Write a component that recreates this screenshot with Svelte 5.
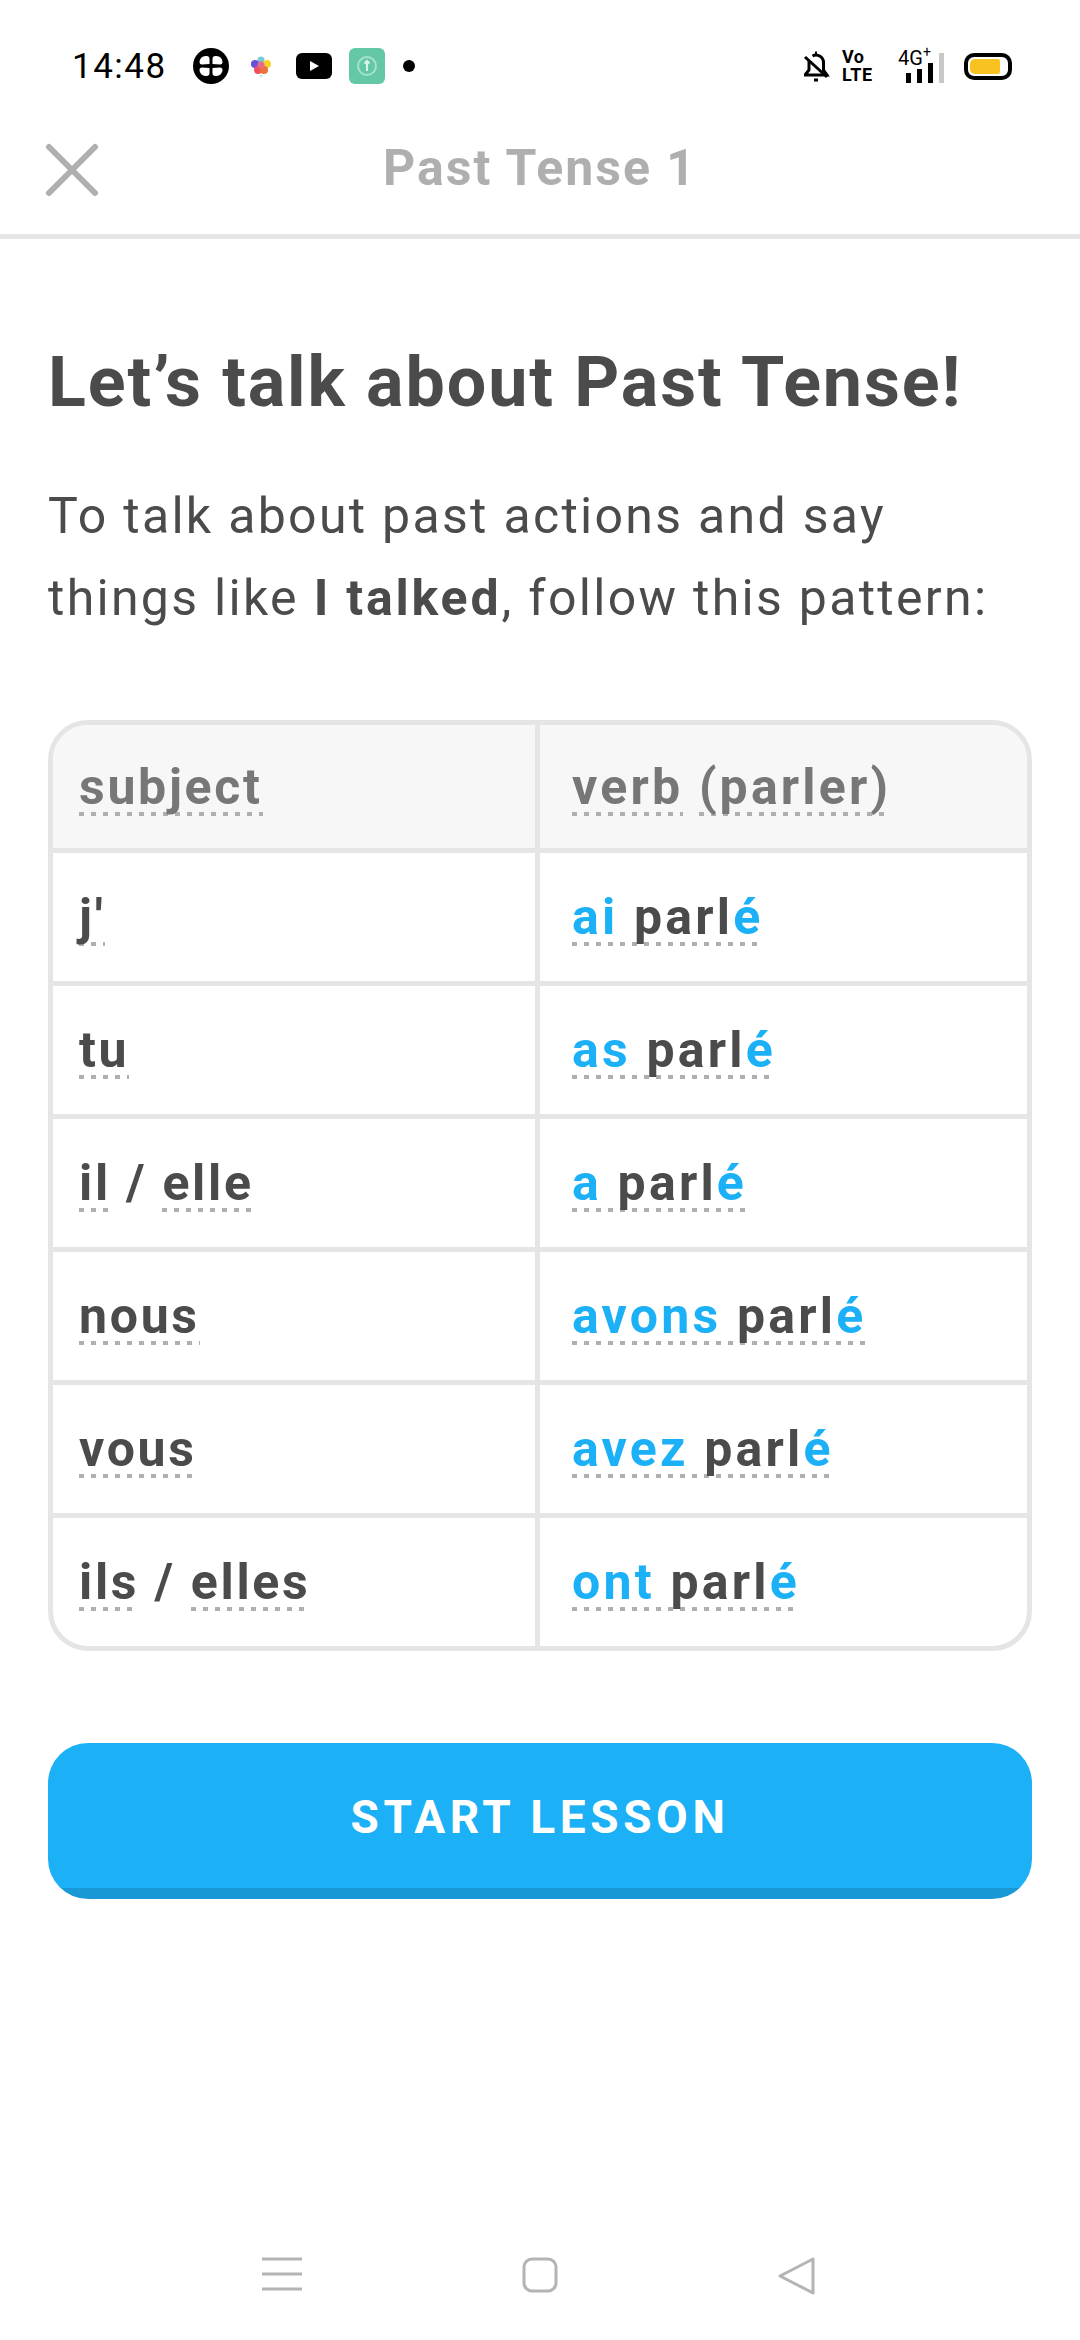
<script>
  const rows = [
    { s: ["j'"], a: 'ai', b: 'parl' },
    { s: ['tu'], a: 'as', b: 'parl' },
    { s: ['il', 'elle'], a: 'a', b: 'parl' },
    { s: ['nous'], a: 'avons', b: 'parl' },
    { s: ['vous'], a: 'avez', b: 'parl' },
    { s: ['ils', 'elles'], a: 'ont', b: 'parl' }
  ];
</script>

<div class="page">
  <div class="status">
    <span class="time">14:48</span>
    <svg class="i-clover" viewBox="0 0 36 36" width="36" height="36">
      <circle cx="18" cy="18" r="18" fill="#000"/>
      <g fill="#fff">
        <path d="M16.500 16V11a3 3 0 0 0-3-3h-1a6 6 0 0 0-6 6a2.500 2.500 0 0 0 2.500 2.500z"/>
        <path d="M19.500 16V11a3 3 0 0 1 3-3h1a6 6 0 0 1 6 6a2.500 2.500 0 0 1-2.500 2.500z"/>
        <path d="M16.500 20V25a3 3 0 0 1-3 3h-1a6 6 0 0 1-6-6a2.500 2.500 0 0 1 2.500-2.500z"/>
        <path d="M19.500 20V25a3 3 0 0 0 3 3h1a6 6 0 0 0 6-6a2.500 2.500 0 0 0-2.500-2.500z"/>
      </g>
    </svg>
    <svg class="i-star" viewBox="0 0 24 24" width="24" height="24">
      <circle cx="12" cy="6" r="3.500" fill="#7cc8d8"/>
      <circle cx="18" cy="10" r="4" fill="#f6d32a"/>
      <circle cx="6" cy="10" r="4" fill="#6a4fd8"/>
      <circle cx="9" cy="16" r="4" fill="#ef4f5a"/>
      <circle cx="15" cy="16" r="4" fill="#f0703c"/>
      <circle cx="12" cy="11" r="3.500" fill="#e86a8a"/>
      <circle cx="12" cy="22" r="1.500" fill="#bdeef2"/>
    </svg>
    <svg class="i-yt" viewBox="0 0 36 26" width="36" height="26">
      <rect width="36" height="26" rx="6" fill="#000"/>
      <path d="M14 8l9 5-9 5z" fill="#fff"/>
    </svg>
    <svg class="i-teal" viewBox="0 0 36 36" width="36" height="36">
      <rect width="36" height="36" rx="6" fill="#64c8a6"/>
      <circle cx="18" cy="18" r="9" fill="none" stroke="#a6e2cc" stroke-width="2"/>
      <path d="M18 13v10M15.500 15.500L18 13l2.500 2.500" fill="none" stroke="#d8f4ea" stroke-width="2"/>
    </svg>
    <span class="dot"></span>

    <span class="spacer"></span>

    <svg class="i-bell" viewBox="0 0 28 32" width="28" height="32" fill="none" stroke="#000" stroke-width="3">
      <path d="M2 25h23l-3.500-5v-7a7.500 7.500 0 0 0-11-7M7 11v9l-4 5"/>
      <path d="M13 3h2M3 7l22 20M12 30h4"/>
    </svg>
    <span class="volte"><b>Vo</b><b>LTE</b></span>
    <span class="signal">
      <span class="g4">4G<sup>+</sup></span>
      <span class="bars"><i class="b1"></i><i class="b2"></i><i class="b3"></i><i class="b4"></i></span>
    </span>
    <span class="battery"><span class="fill"></span></span>
  </div>

  <header class="top">
    <svg class="close" viewBox="0 0 56 56" width="56" height="56" fill="none" stroke="#afafaf" stroke-width="6" stroke-linecap="round">
      <path d="M5 5l46 46M51 5L5 51"/>
    </svg>
    <h2>Past Tense 1</h2>
  </header>

  <main>
    <h1>Let’s talk about Past Tense!</h1>
    <p>To talk about past actions and say<br/>things like <b>I talked</b>, follow this pattern:</p>

    <div class="table">
      <div class="cell head left"><div><span class="u">subject</span></div></div>
      <div class="cell head right"><div><span class="u">verb</span> <span class="u">(parler)</span></div></div>
      {#each rows as r, i}
        <div class="cell left" class:last={i === rows.length - 1}>
          <div>{#each r.s as w, j}{#if j > 0}{' / '}{/if}<span class="u">{w}</span>{/each}</div>
        </div>
        <div class="cell right" class:last={i === rows.length - 1}>
          <div><span class="u"><span class="blue">{r.a}</span> {r.b}<span class="blue">é</span></span></div>
        </div>
      {/each}
    </div>

    <button class="start">START LESSON</button>
  </main>

  <nav class="sysnav">
    <svg viewBox="0 0 40 34" width="40" height="34" fill="none" stroke="#b4b4b4" stroke-width="3">
      <path d="M0 2h40M0 17h40M0 32h40"/>
    </svg>
    <svg viewBox="0 0 36 36" width="36" height="36" fill="none" stroke="#b4b4b4" stroke-width="3">
      <rect x="2" y="2" width="32" height="32" rx="8"/>
    </svg>
    <svg viewBox="0 0 38 38" width="38" height="38" fill="none" stroke="#b4b4b4" stroke-width="3" stroke-linejoin="round">
      <path d="M35 2v34L2 19z"/>
    </svg>
  </nav>
</div>

<style>
  :global(body) { margin: 0; background: #fff; }
  .page {
    width: 1080px; height: 2340px; display: flex; flex-direction: column;
    font-family: Roboto, "Noto Sans", sans-serif; color: #4b4b4b; background: #fff; overflow: hidden;
  }
  .status { height: 100px; box-sizing: border-box; padding: 32px 68px 0 72px; display: flex; align-items: center; flex: none; color: #000; }
  .time { font-size: 35px; width: 121px; letter-spacing: 1.5px; white-space: nowrap; }
  .i-star { margin-left: 20px; }
  .i-yt { margin-left: 23px; }
  .i-teal { margin-left: 17px; }
  .dot { width: 12px; height: 12px; border-radius: 50%; background: #000; margin-left: 18px; }
  .spacer { flex: 1; }
  .volte { display: flex; flex-direction: column; font-size: 18px; line-height: 18px; letter-spacing: 0.5px; margin-left: 12px; width: 36px; }
  .signal { position: relative; width: 54px; height: 34px; margin-left: 12px; }
  .g4 { position: absolute; left: 8px; top: -2px; font-size: 20px; line-height: 22px; }
  .g4 sup { font-size: 14px; line-height: 0; }
  .bars { position: absolute; left: 16px; bottom: 0; display: flex; align-items: flex-end; gap: 6px; }
  .bars i { display: block; width: 5px; background: #000; }
  .b1 { height: 10px; } .b2 { height: 14px; } .b3 { height: 20px; }
  .bars .b4 { height: 30px; background: #c8c8c8; }
  .battery { margin-left: 20px; width: 48px; height: 27px; box-sizing: border-box; border: 4px solid #000; border-radius: 10px; padding: 2px; display: flex; }
  .fill { width: 30px; background: #f8c320; border-radius: 5px 2px 2px 5px; }

  .top { height: 139px; box-sizing: border-box; flex: none; border-bottom: 5px solid #e5e5e5; display: flex; align-items: center; position: relative; justify-content: center; }
  .close { position: absolute; left: 44px; top: 42px; }
  h2 { margin: 2px 0 0; font-size: 50px; font-weight: 700; color: #afafaf; letter-spacing: 2px; white-space: nowrap; }

  main { padding: 0 48px; flex: 1; }
  h1 { margin: 105px 0 0; font-size: 70px; line-height: 76px; font-weight: 700; color: #4b4b4b; letter-spacing: 1.9px; white-space: nowrap; }
  p { margin: 55px 0 0; font-size: 50px; line-height: 82px; color: #4b4b4b; letter-spacing: 2.3px; white-space: nowrap; }
  p b { font-weight: 700; letter-spacing: 2.8px; }

  .table { margin-top: 81px; border: 5px solid #e5e5e5; border-radius: 40px; overflow: hidden; display: grid; grid-template-columns: 487px 1fr; }
  .cell { height: 133px; box-sizing: border-box; border-bottom: 5px solid #e5e5e5; padding: 0 26px; display: flex; align-items: center; font-size: 50px; font-weight: 700; color: #4b4b4b; white-space: pre; letter-spacing: 2.7px; }
  .cell.right { padding-left: 32px; letter-spacing: 3.2px; }
  .cell.left { border-right: 5px solid #e5e5e5; }
  .cell.last { border-bottom: none; height: 128px; }
  .head { background: #f7f7f7; color: #777; height: 128px; }
  .u { padding-bottom: 2px; background: repeating-linear-gradient(90deg, #afafaf 0 5px, transparent 5px 12px) left bottom / 100% 4px no-repeat; line-height: 54px; display: inline-block; }
  .blue { color: #1cb0f6; }

  .start { display: block; margin-top: 92px; width: 100%; height: 156px; border: none; border-radius: 40px; background: linear-gradient(#1cb0f6 0 145px, #1899d6 145px); color: #fff; font: 700 46px Roboto, sans-serif; letter-spacing: 4.6px; padding: 0 0 8px; }

  .sysnav { flex: none; height: 83px; display: flex; align-items: flex-start; padding: 0 264px 0 262px; justify-content: space-between; box-sizing: border-box; }
</style>
